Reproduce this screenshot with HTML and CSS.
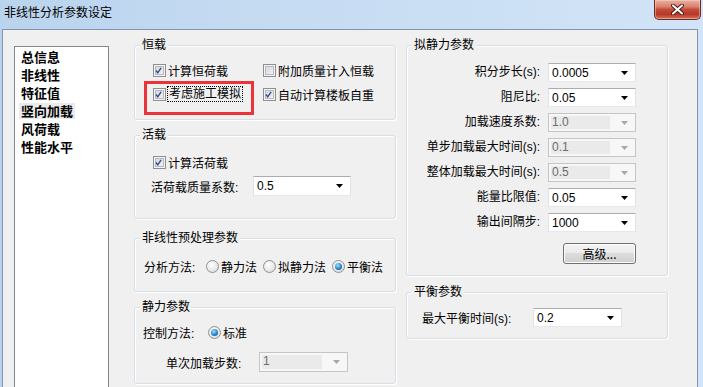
FILE: index.html
```html
<!DOCTYPE html>
<html lang="zh-CN">
<head>
  <meta charset="UTF-8">
  <title>非线性分析参数设定</title>
  <link rel="stylesheet" href="styles.css">
</head>
<body>
  <div class="window">
    <div class="titlebar">
      <span class="title">非线性分析参数设定</span>
      <button class="close">
        <svg width="13" height="11" viewBox="0 0 13 11">
          <path d="M2 1.5 L11 9.5 M11 1.5 L2 9.5" stroke="#4a1712" stroke-width="3.8" stroke-linecap="round"/>
          <path d="M2 1.5 L11 9.5 M11 1.5 L2 9.5" stroke="#ffffff" stroke-width="2" stroke-linecap="round"/>
        </svg>
      </button>
    </div>

    <div class="client">
      <ul class="nav">
        <li>总信息</li>
        <li>非线性</li>
        <li>特征值</li>
        <li class="active">竖向加载</li>
        <li>风荷载</li>
        <li>性能水平</li>
      </ul>

      <div class="col">
        <div class="group dead">
          <span class="legend">恒载</span>
          <label class="chk"><span class="box"><svg viewBox="0 0 13 13"><path d="M3.5 6.5 L5.6 9.2 L9.6 3.4"/></svg></span>计算恒荷载</label>
          <label class="chk"><span class="box"></span>附加质量计入恒载</label>
          <label class="chk marked"><span class="box"><svg viewBox="0 0 13 13"><path d="M3.5 6.5 L5.6 9.2 L9.6 3.4"/></svg></span><span class="focus">考虑施工模拟</span></label>
          <label class="chk"><span class="box"><svg viewBox="0 0 13 13"><path d="M3.5 6.5 L5.6 9.2 L9.6 3.4"/></svg></span>自动计算楼板自重</label>
        </div>

        <div class="group live">
          <span class="legend">活载</span>
          <label class="chk"><span class="box"><svg viewBox="0 0 13 13"><path d="M3.5 6.5 L5.6 9.2 L9.6 3.4"/></svg></span>计算活荷载</label>
          <div class="field">
            <span class="lbl">活荷载质量系数:</span>
            <div class="combo w98"><span class="val">0.5</span><svg class="arrow" width="7" height="4"><polygon points="0,0 7,0 3.5,4"/></svg></div>
          </div>
        </div>

        <div class="group pre">
          <span class="legend">非线性预处理参数</span>
          <div class="field">
            <span class="lbl">分析方法:</span>
            <label class="rad"><span class="dot"></span>静力法</label>
            <label class="rad"><span class="dot"></span>拟静力法</label>
            <label class="rad"><span class="dot on"></span>平衡法</label>
          </div>
        </div>

        <div class="group static">
          <span class="legend">静力参数</span>
          <div class="field">
            <span class="lbl">控制方法:</span>
            <label class="rad"><span class="dot on"></span>标准</label>
          </div>
          <div class="field steps">
            <span class="lbl">单次加载步数:</span>
            <div class="combo off w89"><span class="val">1</span><svg class="arrow" width="7" height="4"><polygon points="0,0 7,0 3.5,4"/></svg></div>
          </div>
        </div>
      </div>

      <div class="col right">
        <div class="group quasi">
          <span class="legend">拟静力参数</span>
          <span class="lbl">积分步长(s):</span>
          <div class="combo"><span class="val">0.0005</span><svg class="arrow" width="7" height="4"><polygon points="0,0 7,0 3.5,4"/></svg></div>
          <span class="lbl">阻尼比:</span>
          <div class="combo"><span class="val">0.05</span><svg class="arrow" width="7" height="4"><polygon points="0,0 7,0 3.5,4"/></svg></div>
          <span class="lbl">加载速度系数:</span>
          <div class="combo off"><span class="val">1.0</span><svg class="arrow" width="7" height="4"><polygon points="0,0 7,0 3.5,4"/></svg></div>
          <span class="lbl">单步加载最大时间(s):</span>
          <div class="combo off"><span class="val">0.1</span><svg class="arrow" width="7" height="4"><polygon points="0,0 7,0 3.5,4"/></svg></div>
          <span class="lbl">整体加载最大时间(s):</span>
          <div class="combo off"><span class="val">0.5</span><svg class="arrow" width="7" height="4"><polygon points="0,0 7,0 3.5,4"/></svg></div>
          <span class="lbl">能量比限值:</span>
          <div class="combo"><span class="val">0.05</span><svg class="arrow" width="7" height="4"><polygon points="0,0 7,0 3.5,4"/></svg></div>
          <span class="lbl">输出间隔步:</span>
          <div class="combo"><span class="val">1000</span><svg class="arrow" width="7" height="4"><polygon points="0,0 7,0 3.5,4"/></svg></div>
          <button class="btn">高级...</button>
        </div>

        <div class="group balance">
          <span class="legend">平衡参数</span>
          <div class="field">
            <span class="lbl">最大平衡时间(s):</span>
            <div class="combo w89"><span class="val">0.2</span><svg class="arrow" width="7" height="4"><polygon points="0,0 7,0 3.5,4"/></svg></div>
          </div>
        </div>
      </div>
    </div>
  </div>
</body>
</html>
```

FILE: styles.css
```css
* {
  box-sizing: border-box;
}

body {
  margin: 0;
  font-family: "Liberation Sans", "Noto Sans CJK SC", sans-serif;
  font-size: 12px;
  color: #000;
}

.window {
  width: 703px;
  height: 387px;
  overflow: hidden;
  display: flex;
  flex-direction: column;
  background: linear-gradient(to right, #bad4ee, #c8ddf3 50%, #d2e4f7);
}

.titlebar {
  height: 29px;
  flex: none;
  display: flex;
  justify-content: space-between;
  align-items: flex-start;
}

.title {
  padding: 5px 0 0 4px;
  line-height: 14px;
  font-family: "Noto Sans CJK SC", sans-serif;
}

.close {
  width: 47px;
  height: 20px;
  margin-right: 2px;
  padding: 0;
  display: flex;
  align-items: center;
  justify-content: center;
  border: 1px solid #6f2a22;
  border-top: none;
  border-radius: 0 0 5px 5px;
  background: linear-gradient(#eab1a3 0%, #d8826f 35%, #c34b3a 50%, #b73828 75%, #d5735c 100%);
  box-shadow: inset 0 0 0 1px rgba(255, 220, 210, 0.45);
}

.client {
  flex: 1;
  margin: 0 5px 0 2px;
  border: 1px solid #8195b1;
  border-bottom: none;
  background: #f0f0f0;
  padding: 15px 0 0 11px;
  display: flex;
  align-items: flex-start;
}

/* left list */
.nav {
  width: 95px;
  height: 345px;
  margin: 1px 0 0;
  padding: 2px 0 0 4px;
  list-style: none;
  background: #fff;
  border: 1px solid #828790;
  flex: none;
}

.nav li {
  width: fit-content;
  height: 16px;
  line-height: 16px;
  margin-bottom: 2px;
  padding: 0 2px;
  font-family: "Noto Sans CJK SC", sans-serif;
  font-size: 13px;
  font-weight: bold;
}

.nav li.active {
  background: #ebebeb;
}

.col {
  width: 262px;
  margin-left: 25px;
  flex: none;
}

.col.right {
  margin-left: 10px;
}

/* group boxes */
.group {
  position: relative;
  border: 1px solid #d5dfe5;
  border-radius: 3px;
  box-shadow: inset 1px 1px 0 #fff, 1px 1px 0 #fff;
}

.legend {
  position: absolute;
  top: -8px;
  left: 5px;
  padding: 0 2px;
  line-height: 14px;
  background: #f0f0f0;
}

.dead {
  height: 75px;
  margin-bottom: 15px;
  padding: 16px 0 0 18px;
  display: grid;
  grid-template-columns: 110px auto;
  grid-auto-rows: 16px;
  row-gap: 8px;
}

.live {
  height: 84px;
  margin-bottom: 19px;
  padding: 18px 0 0 18px;
}

.live .field {
  margin: 6px 0 0 -2px;
}

.live .lbl {
  width: 102px;
}

.pre {
  height: 54px;
  margin-bottom: 15px;
  padding: 19px 0 0 9px;
}

.pre .lbl {
  width: 62px;
}

.static {
  height: 77px;
  padding: 16px 0 0 8px;
}

.static .lbl {
  width: 65px;
}

.static .steps {
  margin: 11px 0 0 23px;
}

.static .steps .lbl {
  width: 93px;
}

.quasi {
  height: 231px;
  margin-bottom: 16px;
  padding: 17px 0 0 0;
  display: grid;
  grid-template-columns: 133px 88px;
  grid-auto-rows: 19px;
  column-gap: 8px;
  row-gap: 6px;
  align-content: start;
}

.quasi .lbl {
  text-align: right;
  line-height: 19px;
}

.balance {
  height: 47px;
  padding: 15px 0 0 15px;
}

.balance .lbl {
  width: 111px;
}

.field {
  display: flex;
  align-items: center;
  min-height: 16px;
}

.lbl {
  flex: none;
  white-space: nowrap;
}

/* checkbox */
.chk {
  position: relative;
  display: flex;
  align-items: center;
  gap: 2px;
  height: 16px;
  white-space: nowrap;
}

.box {
  width: 13px;
  height: 13px;
  flex: none;
  border: 1px solid #8e8f8f;
  background: linear-gradient(135deg, #cfd3d9, #f7f7f7);
  box-shadow: inset 0 0 0 1px #f4f4f4, inset 0 0 0 2px #b7bbc1;
}

.box svg {
  display: block;
  width: 11px;
  height: 11px;
  margin: 0 0 0 -1px;
  overflow: visible;
}

.box path {
  fill: none;
  stroke: #3a4e92;
  stroke-width: 1.7;
}

.focus {
  outline: 1px dotted #000;
  padding: 0 1px;
  line-height: 14px;
}

.marked::after {
  content: "";
  position: absolute;
  left: -9px;
  top: -5px;
  width: 104px;
  height: 28px;
  border: 3px solid #ec3338;
}

/* radio */
.rad {
  display: flex;
  align-items: center;
  gap: 2px;
  margin-right: 6px;
  white-space: nowrap;
}

.dot {
  width: 13px;
  height: 13px;
  flex: none;
  border-radius: 50%;
  border: 1px solid #909090;
  background: radial-gradient(circle at 40% 35%, #ffffff, #d6d6d6);
}

.dot.on::after {
  content: "";
  display: block;
  width: 7px;
  height: 7px;
  margin: 2px;
  border-radius: 50%;
  background: radial-gradient(circle at 40% 35%, #9fe0ff, #2a85cc 55%, #0d3f7c);
}

/* combo box */
.combo {
  height: 19px;
  display: flex;
  align-items: center;
  justify-content: space-between;
  padding: 0 7px 0 3px;
  background: #fff;
  border: 1px solid;
  border-color: #abadb3 #e2e3ea #e3e9ef #e2e3ea;
}

.combo.w98 {
  width: 98px;
  height: 20px;
}

.combo.w89 {
  width: 89px;
}

.static .combo.w89 {
  height: 20px;
}

.combo.off {
  padding: 2px 7px 2px 2px;
  background: #f7f7f7;
  border-color: #c3c5c9;
  color: #6d6d6d;
}

.combo.off .val {
  flex: 1;
  align-self: stretch;
  margin-right: 11px;
  padding-left: 1px;
  line-height: 13px;
  background: #eaeaea;
}

.combo.off .arrow {
  fill: #a8a8a8;
}

.arrow {
  flex: none;
  fill: #000;
}

.btn {
  grid-column: 1 / -1;
  justify-self: end;
  width: 73px;
  height: 21px;
  margin-top: 5px;
  padding: 0;
  font: inherit;
  font-family: "Noto Sans CJK SC", sans-serif;
  border: 1px solid #707070;
  border-radius: 3px;
  background: linear-gradient(#f2f2f2 0%, #ebebeb 50%, #dddddd 50%, #cfcfcf 100%);
  box-shadow: inset 0 0 0 1px #fcfcfc;
}
```
